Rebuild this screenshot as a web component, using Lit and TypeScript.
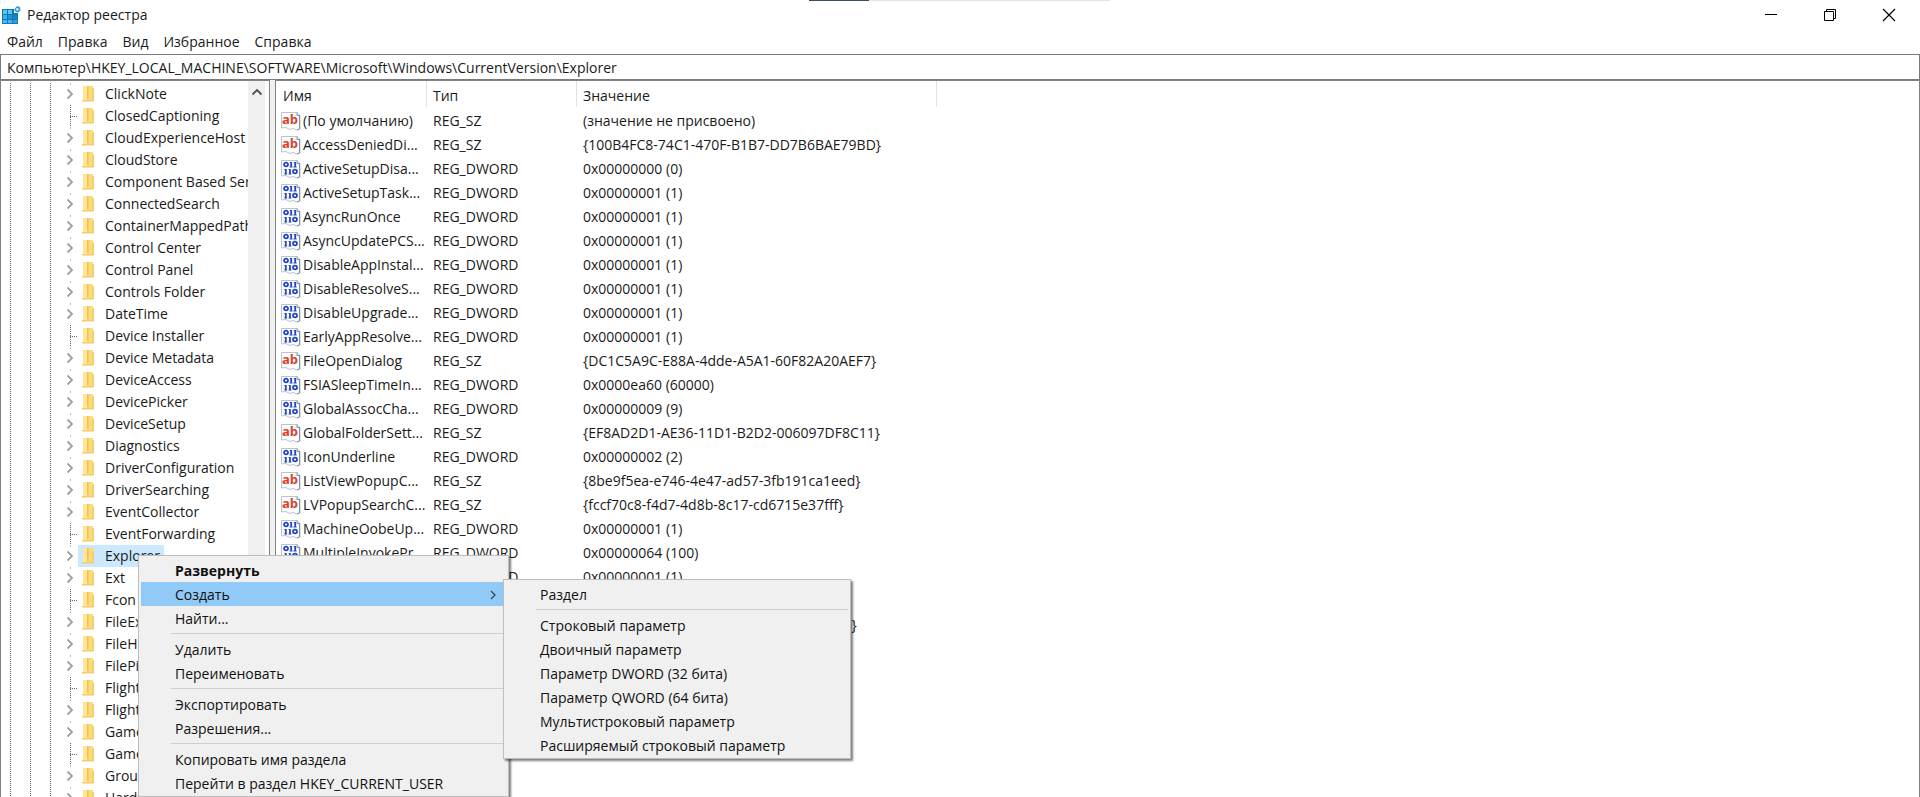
import { LitElement, html, css, svg } from "lit";
import { customElement, property } from "lit/decorators.js";
import { classMap } from "lit/directives/class-map.js";

type RegType = "REG_SZ" | "REG_DWORD";
interface TreeKey { name: string; leaf?: boolean; selected?: boolean; }
interface RegValue { name: string; type: RegType; data: string; }
interface MenuEntry { label: string; bold?: boolean; active?: boolean; }

const key = (name: string): TreeKey => ({ name });
const leaf = (name: string): TreeKey => ({ name, leaf: true });
const sz = (name: string, data: string): RegValue => ({ name, type: "REG_SZ", data });
const dword = (name: string, data = "0x00000001 (1)"): RegValue => ({ name, type: "REG_DWORD", data });

const MENUS = ["Файл", "Правка", "Вид", "Избранное", "Справка"];
const PATH = "Компьютер\\HKEY_LOCAL_MACHINE\\SOFTWARE\\Microsoft\\Windows\\CurrentVersion\\Explorer";

const KEYS: TreeKey[] = [
  key("ClickNote"), leaf("ClosedCaptioning"), key("CloudExperienceHost"), key("CloudStore"),
  key("Component Based Servicing"), key("ConnectedSearch"), key("ContainerMappedPaths"),
  key("Control Center"), key("Control Panel"), key("Controls Folder"), key("DateTime"),
  leaf("Device Installer"), key("Device Metadata"), key("DeviceAccess"), key("DevicePicker"),
  key("DeviceSetup"), key("Diagnostics"), key("DriverConfiguration"), key("DriverSearching"),
  key("EventCollector"), leaf("EventForwarding"), { name: "Explorer", selected: true },
  key("Ext"), leaf("Fcon"), key("FileExplorer"), key("FileHistory"), key("FilePicker"),
  leaf("Flighting"), key("Flighting"), key("Game"), leaf("GameInput"), key("Group Policy"),
  key("HardwareIdentification"),
];

const VALUES: RegValue[] = [
  sz("(По умолчанию)", "(значение не присвоено)"),
  sz("AccessDeniedDi...", "{100B4FC8-74C1-470F-B1B7-DD7B6BAE79BD}"),
  dword("ActiveSetupDisa...", "0x00000000 (0)"),
  dword("ActiveSetupTask..."),
  dword("AsyncRunOnce"),
  dword("AsyncUpdatePCS..."),
  dword("DisableAppInstal..."),
  dword("DisableResolveS..."),
  dword("DisableUpgrade..."),
  dword("EarlyAppResolve..."),
  sz("FileOpenDialog", "{DC1C5A9C-E88A-4dde-A5A1-60F82A20AEF7}"),
  dword("FSIASleepTimeIn...", "0x0000ea60 (60000)"),
  dword("GlobalAssocCha...", "0x00000009 (9)"),
  sz("GlobalFolderSett...", "{EF8AD2D1-AE36-11D1-B2D2-006097DF8C11}"),
  dword("IconUnderline", "0x00000002 (2)"),
  sz("ListViewPopupC...", "{8be9f5ea-e746-4e47-ad57-3fb191ca1eed}"),
  sz("LVPopupSearchC...", "{fccf70c8-f4d7-4d8b-8c17-cd6715e37fff}"),
  dword("MachineOobeUp..."),
  dword("MultipleInvokePr...", "0x00000064 (100)"),
  dword("NoWaitOnPower..."),
  sz("SmartScreenEna...", "Off"),
  sz("TaskScheduler", "{0f87369f-a4e5-4cfc-bd3e-73e6154572dd}"),
];

const CONTEXT_MENU: MenuEntry[][] = [
  [{ label: "Развернуть", bold: true }, { label: "Создать", active: true }, { label: "Найти..." }],
  [{ label: "Удалить" }, { label: "Переименовать" }],
  [{ label: "Экспортировать" }, { label: "Разрешения..." }],
  [{ label: "Копировать имя раздела" }, { label: "Перейти в раздел HKEY_CURRENT_USER" }],
];

const NEW_MENU: MenuEntry[][] = [
  [{ label: "Раздел" }],
  [
    { label: "Строковый параметр" }, { label: "Двоичный параметр" },
    { label: "Параметр DWORD (32 бита)" }, { label: "Параметр QWORD (64 бита)" },
    { label: "Мультистроковый параметр" }, { label: "Расширяемый строковый параметр" },
  ],
];

const appIcon = html`<svg width="20" height="20" viewBox="0 0 20 20" aria-hidden="true">
  <path d="M1 4h12v4h4v11H1z" fill="#1279b8"/>
  <path d="M2 5h4v4H2zM7 5h4v4H7z" fill="#5cc8ee"/>
  <path d="M2 10h4v4H2z" fill="#39b4e6"/><path d="M7 10h4v4H7z" fill="#1f93cf"/>
  <path d="M12 10h4v4h-4z" fill="#1783c2"/>
  <path d="M2 15h4v3H2zM7 15h4v3H7z" fill="#45bdea"/><path d="M12 15h4v3h-4z" fill="#2ba4dc"/>
  <path d="m16 1 3 1 .6 3-2 2.400-3-.4-1.600-2.600z" fill="#3d9fd0"/>
  <circle cx="16.300" cy="4.200" r="1.200" fill="#d8f1fb"/>
</svg>`;

const folderIcon = html`<svg class="folder" width="14" height="18" viewBox="0 0 14 18" aria-hidden="true">
  <path d="M1 1h10v2h1v13H1z" fill="#fbdb7c"/>
  <path d="M1 1h4v15H1z" fill="#fde59b"/>
  <path d="M5 1h1.500v13H5z" fill="#f1c24c"/>
  <path d="M10 4h2v12h-2z" fill="#f6cf66"/>
  <path d="M0 15h12v1.500H0z" fill="#f3cc68"/>
</svg>`;

const chevron = html`<svg width="8" height="12" viewBox="0 0 8 12" aria-hidden="true">
  <path d="m1.500 1.500 4.500 4.500-4.500 4.500" fill="none" stroke="currentColor" stroke-width="1.800"/>
</svg>`;

const valueIcon = (type: RegType) => html`<svg width="20" height="20" viewBox="0 0 20 20" aria-hidden="true">
  <path d="M.5 1.500H16l3 3V18l-3 1-4-1.500-3.500 1L5 16.500l-4.500.5z" fill="#fafcfe" stroke="#b9c4cc"/>
  <path d="M16 1.500v3h3M18.500 5v13l-2.500.8" fill="none" stroke="#7f93a3"/>
  ${type === "REG_SZ"
    ? svg`<text x="9" y="13" class="ab">ab</text>`
    : svg`<g fill="none" stroke="#2747c0" stroke-width="1.800">
        <ellipse cx="5" cy="5.500" rx="2" ry="1.900"/>
        <ellipse cx="14" cy="12.500" rx="2" ry="1.900"/>
        <path d="M10.200 3v5M14.200 3v5M4.800 10v5M9 10v5"/>
        <path d="M8.800 3.500h1.400M12.800 3.500h1.400M3.400 10.500h1.400M7.600 10.500H9M3.200 15h3M7.400 15h3M8.600 8h3M12.600 8h3" stroke-width="1"/>
      </g>`}
</svg>`;

@customElement("popup-menu")
export class PopupMenu extends LitElement {
  @property({ attribute: false }) groups: MenuEntry[][] = [];

  static styles = css`
    :host {
      display: block;
      box-sizing: border-box;
      background: #f0f0f0;
      border: 1px solid #bdbdbd;
      padding: 2px 2px 1px;
      box-shadow: 2px 2px 2px #00000080;
    }
    .item {
      display: flex;
      align-items: center;
      justify-content: space-between;
      width: 100%;
      height: 24px;
      border: 0;
      padding: 2px 10px 0 34px;
      background: none;
      color: #111;
      font: inherit;
      text-align: left;
      white-space: nowrap;
    }
    .bold { font-weight: 700; }
    .active { background: #91c9f7; }
    .arrow { color: #2b4b63; }
    hr {
      height: 1px;
      margin: 3px 0 3px 30px;
      border: 0;
      background: #cfcfcf;
    }
  `;

  render() {
    return this.groups.map((group, i) => html`
      ${i ? html`<hr />` : ""}
      ${group.map((e) => html`
        <button role="menuitem" class=${classMap({ item: true, bold: !!e.bold, active: !!e.active })}>
          <span>${e.label}</span>
          ${e.active ? html`<svg class="arrow" width="6" height="10" viewBox="0 0 6 10" aria-hidden="true">
            <path d="m1 1 4 4-4 4" fill="none" stroke="currentColor" stroke-width="1.300"/></svg>` : ""}
        </button>`)}
    `);
  }
}

@customElement("app-root")
export class AppRoot extends LitElement {
  static styles = css`
    :host {
      display: flex;
      flex-direction: column;
      position: relative;
      height: 100vh;
      overflow: hidden;
      background: #fff;
      color: #1a1a1a;
      font: 14px/20px "Open Sans", "Noto Sans", sans-serif;
    }
    .backdrop {
      position: absolute;
      top: 0;
      left: 809px;
      display: flex;
      width: 301px;
      height: 1px;
      background: #e4e4e4;
    }
    .backdrop-tab { width: 60px; background: #3d4c5e; }
    .titlebar {
      display: flex;
      align-items: center;
      flex: none;
      height: 30px;
      padding: 0 2px 0 1px;
      gap: 6px;
    }
    h1 { flex: 1; margin: 0; font: inherit; }
    .controls { display: flex; height: 100%; }
    .control {
      display: grid;
      place-items: center;
      width: 59px;
      border: 0;
      padding: 0;
      background: none;
      color: #000;
    }
    .menubar { display: flex; flex: none; height: 24px; padding-left: 7px; gap: 15px; }
    .menubar button {
      border: 0;
      padding: 0;
      background: none;
      color: inherit;
      font: inherit;
    }
    .address {
      flex: none;
      box-sizing: border-box;
      width: 100%;
      height: 26px;
      margin: 0;
      border: 1px solid #7a7a7a;
      border-radius: 0;
      padding: 0 6px;
      outline: none;
      background: #fff;
      color: inherit;
      font: inherit;
    }
    .panes {
      display: grid;
      grid-template-columns: 270px 5px 1fr;
      flex: 1;
      min-height: 0;
      background: #f0f0f0;
    }
    .pane {
      box-sizing: border-box;
      min-width: 0;
      overflow: hidden;
      border: 1px solid #828282;
      border-bottom: 0;
      background: #fff;
    }
    .tree-pane { display: flex; }
    .tree {
      flex: 1;
      min-width: 0;
      margin: 0;
      padding: 2px 0 0;
      overflow: hidden;
      list-style: none;
    }
    .key { display: flex; align-items: center; height: 22px; white-space: nowrap; }
    .guide {
      flex: none;
      align-self: stretch;
      width: 20px;
      background: repeating-linear-gradient(#666 0 1px, #fff0 1px 2px) right top / 1px 100% no-repeat;
    }
    .guide:first-child { width: 10px; }
    .branch {
      box-sizing: border-box;
      display: flex;
      align-items: center;
      flex: none;
      align-self: stretch;
      width: 27px;
      padding-left: 15px;
      background: linear-gradient(#bbb, #bbb) 19px 0 / 1px 2px no-repeat;
      color: #a0a0a0;
    }
    .leaf {
      background:
        repeating-linear-gradient(#666 0 1px, #fff0 1px 2px) 19px 0 / 1px 100% no-repeat,
        repeating-linear-gradient(90deg, #666 0 1px, #fff0 1px 2px) 19px 11px / 8px 1px no-repeat;
    }
    .label {
      display: flex;
      align-items: center;
      height: 100%;
      padding: 0 4px;
      gap: 9px;
    }
    .selected { background: #cce8ff; }
    .folder { flex: none; }
    .scrollbar { flex: none; width: 17px; margin-right: 4px; background: #f0f0f0; }
    .scroll-up {
      display: grid;
      place-items: center;
      width: 17px;
      height: 22px;
      border: 0;
      padding: 0;
      background: none;
      color: #505050;
    }
    .values { width: 100%; table-layout: fixed; border-collapse: collapse; }
    .col-name { width: 151px; }
    .col-type { width: 150px; }
    .col-data { width: 360px; }
    th {
      height: 26px;
      padding: 2px 0 0 6px;
      text-align: left;
      font-weight: 400;
      background: linear-gradient(#e2e2e2, #e2e2e2) right top / 1px 26px no-repeat;
    }
    th:last-child { background: none; }
    td { height: 24px; padding: 0 0 0 6px; white-space: nowrap; }
    th:first-child { padding-left: 7px; }
    td:first-child { padding-left: 5px; }
    .value-name { display: flex; align-items: center; gap: 2px; }
    .value-name svg { flex: none; }
    .ab { font: 700 13px "Open Sans", sans-serif; fill: #d8452c; text-anchor: middle; }
    .context { position: absolute; top: 555px; left: 138px; width: 371px; }
    .submenu { position: absolute; top: 579px; left: 503px; width: 348px; }
  `;

  private renderKey(k: TreeKey) {
    return html`<li class="key" role="treeitem" aria-selected=${k.selected ? "true" : "false"}>
      <span class="guide"></span><span class="guide"></span><span class="guide"></span>
      <span class=${classMap({ branch: true, leaf: !!k.leaf })}>${k.leaf ? "" : chevron}</span>
      <span class=${classMap({ label: true, selected: !!k.selected })}>
        ${folderIcon}<span>${k.name}</span>
      </span>
    </li>`;
  }

  render() {
    return html`
      <header class="titlebar">
        ${appIcon}
        <h1>Редактор реестра</h1>
        <div class="controls">
          <button class="control" aria-label="Свернуть">
            <svg width="14" height="14" viewBox="0 0 14 14"><path d="M1 6.500h12" stroke="currentColor"/></svg>
          </button>
          <button class="control" aria-label="Свернуть в окно">
            <svg width="14" height="14" viewBox="0 0 14 14"><path d="M1.500 3.500h9v9h-9zM3.500 3V1.500h9v9H11" fill="none" stroke="currentColor"/></svg>
          </button>
          <button class="control" aria-label="Закрыть">
            <svg width="14" height="14" viewBox="0 0 14 14"><path d="m1 1 12 12M13 1 1 13" stroke="currentColor" stroke-width="1.200"/></svg>
          </button>
        </div>
      </header>
      <nav class="menubar">${MENUS.map((m) => html`<button>${m}</button>`)}</nav>
      <input class="address" type="text" aria-label="Адрес" .value=${PATH} />
      <main class="panes">
        <section class="pane tree-pane">
          <ul class="tree" role="tree">${KEYS.map((k) => this.renderKey(k))}</ul>
          <div class="scrollbar">
            <button class="scroll-up" aria-label="Вверх">
              <svg width="12" height="8" viewBox="0 0 12 8"><path d="m1.500 6.500 4.500-4.500 4.500 4.500" fill="none" stroke="currentColor" stroke-width="1.800"/></svg>
            </button>
          </div>
        </section>
        <div></div>
        <section class="pane">
          <table class="values">
            <colgroup><col class="col-name" /><col class="col-type" /><col class="col-data" /><col /></colgroup>
            <thead><tr><th>Имя</th><th>Тип</th><th>Значение</th><th></th></tr></thead>
            <tbody>
              ${VALUES.map((v) => html`<tr>
                <td><span class="value-name">${valueIcon(v.type)}<span>${v.name}</span></span></td>
                <td>${v.type}</td><td>${v.data}</td><td></td>
              </tr>`)}
            </tbody>
          </table>
        </section>
      </main>
      <div class="backdrop"><span class="backdrop-tab"></span></div>
      <popup-menu class="context" role="menu" .groups=${CONTEXT_MENU}></popup-menu>
      <popup-menu class="submenu" role="menu" .groups=${NEW_MENU}></popup-menu>
    `;
  }
}
